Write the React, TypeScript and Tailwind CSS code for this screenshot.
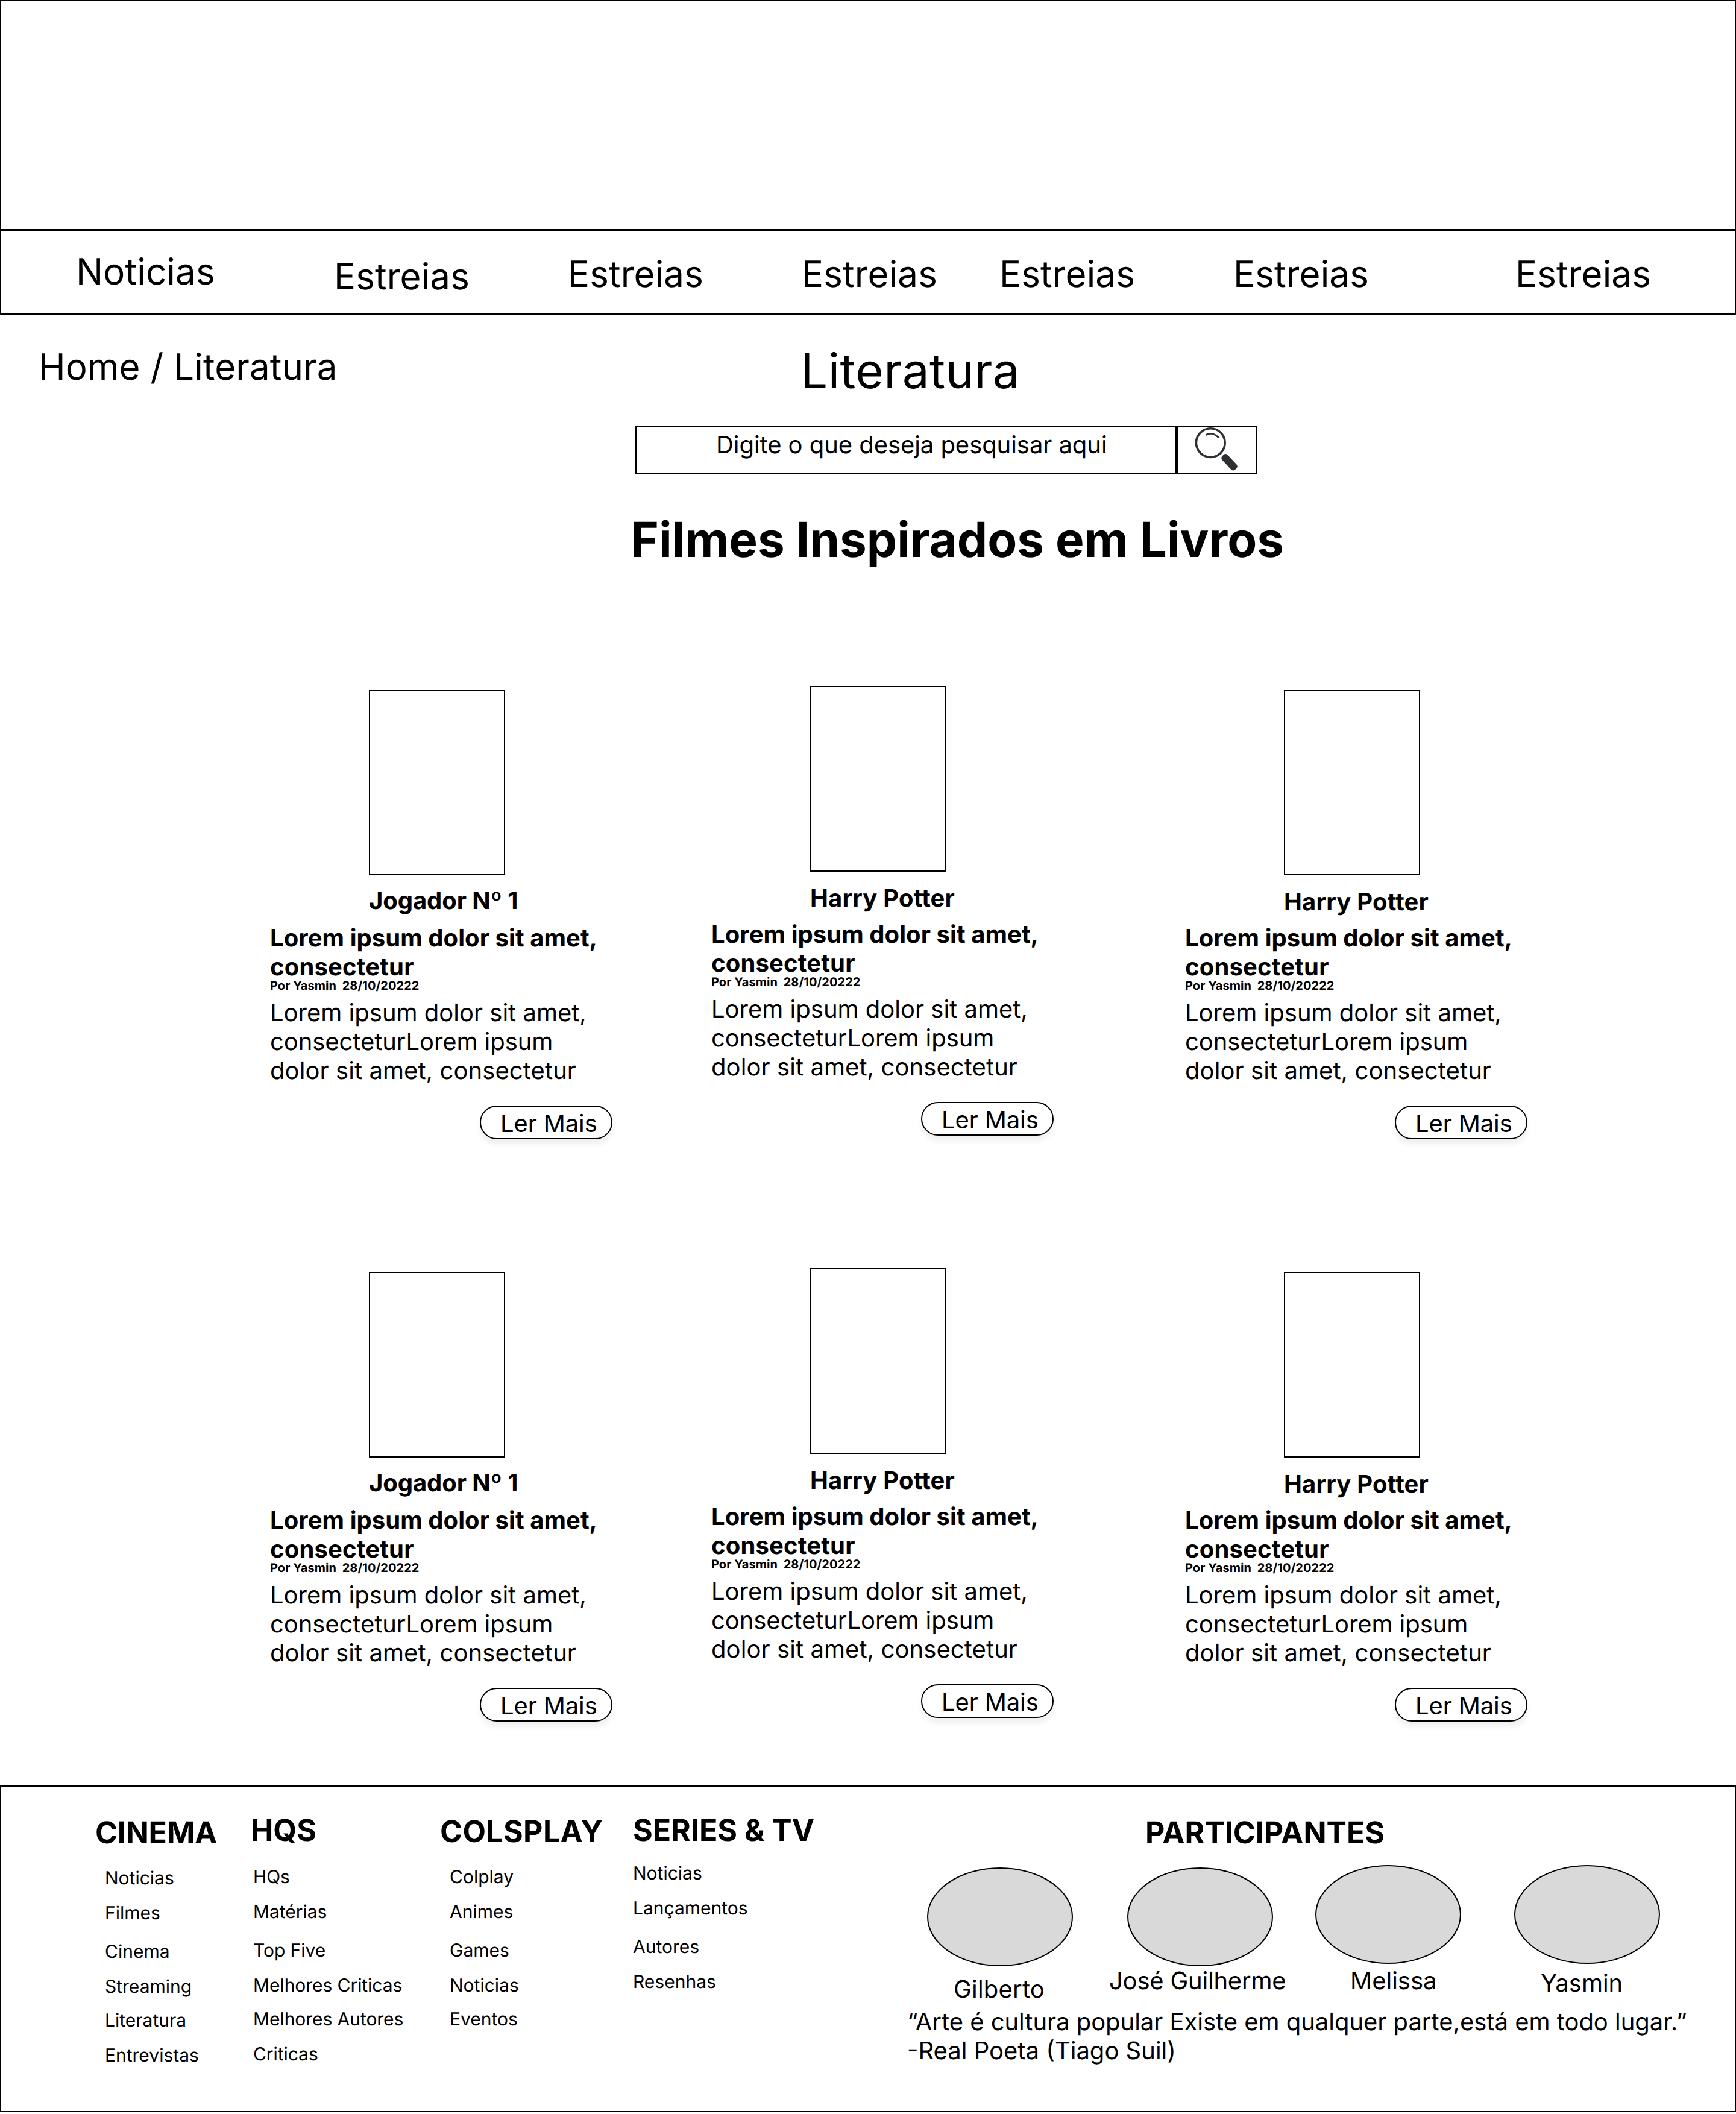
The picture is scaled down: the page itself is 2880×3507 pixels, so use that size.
const navItems = [
  { label: "Noticias", cell: "w-[428px] pt-[31px]" },
  { label: "Estreias", cell: "w-[388px] pt-[39px]" },
  { label: "Estreias", cell: "w-[388px] pt-[35px]" },
  { label: "Estreias", cell: "w-[328px] pt-[35px]" },
  { label: "Estreias", cell: "w-[388px] pt-[35px]" },
  { label: "Estreias", cell: "w-[468px] pt-[35px]" },
  { label: "Estreias", cell: "pt-[35px]" },
];

const cards = [
  { title: "Jogador Nº 1", cell: "mt-[6px]", heading: "mt-[17px] mb-[14px] tracking-[-0.08px]" },
  { title: "Harry Potter", cell: "ml-[164px]", heading: "mt-[19px] mb-[12px] tracking-[0.18px]" },
  { title: "Harry Potter", cell: "mt-[6px] ml-[218px]", heading: "mt-[19px] mb-[12px] tracking-[0.18px]" },
];

const linkColumns = [
  {
    title: "CINEMA",
    cell: "w-[258px] pt-[47px]",
    heading: "tracking-[-0.2px]",
    list: "mt-[27px] ml-[16px]",
    links: ["Noticias", "Filmes", "Cinema", "Streaming", "Literatura", "Entrevistas"],
  },
  {
    title: "HQS",
    cell: "w-[314px] pt-[43px]",
    heading: "",
    list: "mt-[29px] ml-[4px] tracking-[-0.06px]",
    links: ["HQs", "Matérias", "Top Five", "Melhores Criticas", "Melhores Autores", "Criticas"],
  },
  {
    title: "COLSPLAY",
    cell: "w-[320px] pt-[45px]",
    heading: "tracking-[0.4px]",
    list: "mt-[27px] ml-[16px]",
    links: ["Colplay", "Animes", "Games", "Noticias", "Eventos"],
  },
  {
    title: "SERIES & TV",
    cell: "w-[455px] pt-[43px]",
    heading: "",
    list: "mt-[23px]",
    links: ["Noticias", "Lançamentos", "Autores", "Resenhas"],
  },
];

const linkHeights = ["h-[58px]", "h-[64px]", "h-[58px]", "h-[56px]", "h-[58px]", "h-[36px]"];

const people = [
  { name: "Gilberto", cell: "mt-[4px] ml-[33px]", label: "mt-[13px] ml-[44px] tracking-[0.2px]" },
  { name: "José Guilherme", cell: "mt-[4px] ml-[90px]", label: "-mt-px -ml-[30px] tracking-[-0.22px]" },
  { name: "Melissa", cell: "ml-[70px]", label: "mt-[3px] ml-[58px]" },
  { name: "Yasmin", cell: "ml-[88px]", label: "mt-[7px] ml-[44px]" },
];

function SearchIcon() {
  return (
    <svg width="74" height="74" viewBox="0 0 74 74" fill="none" stroke="#2d3134" className="block">
      <circle cx="28.3" cy="26.6" r="23.9" strokeWidth="3.6" />
      <path d="M21.3 13.2Q31 8.2 41 17.3" strokeWidth="2.8" strokeLinecap="round" />
      <rect x="-15.5" y="-6.2" width="31" height="12.4" rx="4.5" fill="#2d3134" stroke="none" transform="translate(59.5 58.8) rotate(47)" />
    </svg>
  );
}

function Card({ title, cell, heading }: { title: string; cell: string; heading: string }) {
  return (
    <article className={`w-[568px] shrink-0 ${cell}`}>
      <div className="ml-[164px] h-[308px] w-[226px] border-2 border-black" />
      <h3 className={`ml-[164px] text-[40px] leading-[49px] font-bold whitespace-nowrap ${heading}`}>{title}</h3>
      <p className="text-[40px] leading-[48px] font-bold">
        <span className="block tracking-[0.06px]">Lorem ipsum dolor sit amet,</span>
        <span className="block tracking-[0.18px]">consectetur</span>
      </p>
      <p className="-mt-[5px] text-[20px] leading-[24px] font-bold tracking-[0.06px] whitespace-pre">Por Yasmin  28/10/20222</p>
      <p className="mt-[9px] text-[40px] leading-[48px]">
        <span className="block">Lorem ipsum dolor sit amet,</span>
        <span className="block tracking-[-0.07px]">consecteturLorem ipsum</span>
        <span className="block tracking-[0.08px]">dolor sit amet, consectetur</span>
      </p>
      <button className="mt-[34px] ml-[348px] block h-[56px] w-[220px] rounded-full border-2 border-black pt-[3px] pl-[32px] text-left text-[40px] leading-[49px] tracking-[-0.12px] whitespace-nowrap shadow-[0_9px_8px_0_rgba(0,0,0,0.06)]">
        Ler Mais
      </button>
    </article>
  );
}

export default function App() {
  return (
    <div className="h-[3507px] w-[2880px] overflow-hidden bg-white font-['Inter',sans-serif] text-black [text-rendering:geometricPrecision]">
      <header className="h-[382px] border-2 border-black" />
      <nav className="flex h-[140px] border-2 border-black pl-[124px]">
        {navItems.map((item, i) => (
          <a key={i} className={`shrink-0 text-[60px] leading-[72px] tracking-[0.15px] ${item.cell}`}>
            {item.label}
          </a>
        ))}
      </nav>

      <main>
        <div className="flex h-[184px] pl-[64px]">
          <p className="w-[1264px] pt-[51px] text-[60px] leading-[72px] tracking-[0.12px]">Home / Literatura</p>
          <h1 className="pt-[45px] text-[80px] leading-[97px] tracking-[0.4px]">Literatura</h1>
        </div>

        <div className="ml-[1054px] flex h-[80px] w-[1032px]">
          <div className="w-[898px] border-2 border-black pt-[5px] pl-[132px] text-[40px] leading-[49px] tracking-[-0.06px] whitespace-nowrap">
            Digite o que deseja pesquisar aqui
          </div>
          <div className="w-[134px] border-2 border-black pl-[26px]">
            <SearchIcon />
          </div>
        </div>

        <h2 className="mt-[61px] ml-[1046px] text-[80px] leading-[97px] font-bold whitespace-nowrap">
          Filmes Inspirados em Livros
        </h2>

        <section className="mt-[194px] flex items-start pl-[448px]">
          {cards.map((c, i) => (
            <Card key={i} {...c} />
          ))}
        </section>
        <section className="mt-[214px] flex items-start pl-[448px]">
          {cards.map((c, i) => (
            <Card key={i} {...c} />
          ))}
        </section>
      </main>

      <footer className="mt-[106px] flex h-[542px] border-2 border-black pl-[156px]">
        {linkColumns.map((col) => (
          <div key={col.title} className={`shrink-0 ${col.cell}`}>
            <h4 className={`text-[50px] leading-[60px] font-bold whitespace-nowrap ${col.heading}`}>{col.title}</h4>
            <ul className={`text-[30px] leading-[36px] whitespace-nowrap ${col.list}`}>
              {col.links.map((link, i) => (
                <li key={link} className={linkHeights[i]}>
                  {link}
                </li>
              ))}
            </ul>
          </div>
        ))}

        <div className="pt-[47px]">
          <h4 className="ml-[395px] text-[50px] leading-[60px] font-bold">PARTICIPANTES</h4>
          <div className="mt-[23px] flex h-[236px] items-start">
            {people.map((p) => (
              <div key={p.name} className={`w-[242px] shrink-0 ${p.cell}`}>
                <div className="h-[164px] rounded-[50%] border-2 border-black bg-[#d9d9d9]" />
                <p className={`text-[40px] leading-[49px] whitespace-nowrap ${p.label}`}>{p.name}</p>
              </div>
            ))}
          </div>
          <p className="text-[40px] leading-[48px] whitespace-nowrap">
            <span className="block tracking-[-0.03px]">
              “Arte é cultura popular Existe em qualquer parte,está em todo lugar.”
            </span>
            <span className="block">-Real Poeta (Tiago Suil)</span>
          </p>
        </div>
      </footer>
    </div>
  );
}
